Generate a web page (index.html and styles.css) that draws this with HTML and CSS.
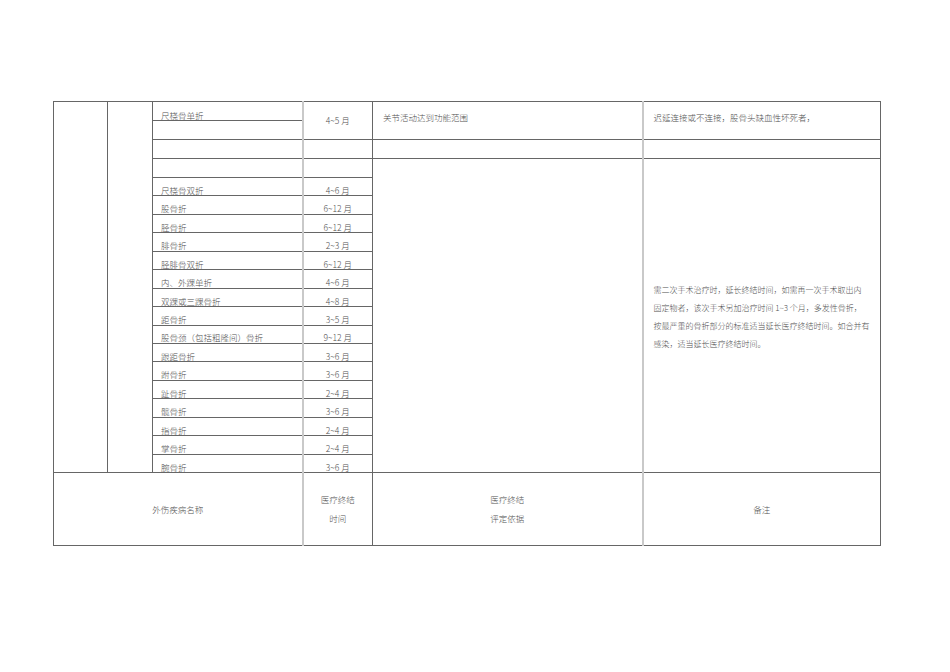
FILE: index.html
```html
<!DOCTYPE html>
<html lang="zh-CN">
<head>
<meta charset="utf-8">
<link rel="stylesheet" href="styles.css">
</head>
<body>
<div class="page">
<table class="sheet">
<colgroup><col class="c1"><col class="c2"><col class="c3"><col class="c4"><col class="c5"><col class="c6"></colgroup>
<tr class="r19">
  <td class="blank" rowspan="20"></td>
  <td class="blank" rowspan="20"></td>
  <td class="name">尺桡骨单折</td>
  <td class="month mid" rowspan="2">4~5 月</td>
  <td class="basis top" rowspan="2">关节活动达到功能范围</td>
  <td class="note top" rowspan="2">迟延连接或不连接，股骨头缺血性坏死者，</td>
</tr>
<tr class="r19"><td class="name"></td></tr>
<tr class="r19"><td class="name"></td><td class="month"></td><td class="basis"></td><td class="note"></td></tr>
<tr class="r19"><td class="name"></td><td class="month"></td><td class="basis" rowspan="17"></td><td class="note remark" rowspan="17">需二次手术治疗时，延长终结时间，如需再一次手术取出内<br>固定物者，该次手术另加治疗时间 1~3 个月，多发性骨折，<br>按最严重的骨折部分的标准适当延长医疗终结时间。如合并有<br>感染，适当延长医疗终结时间。</td></tr>
<tr class="rr"><td class="name">尺桡骨双折</td><td class="month">4~6 月</td></tr>
<tr class="rr"><td class="name">股骨折</td><td class="month">6~12 月</td></tr>
<tr class="rr"><td class="name">胫骨折</td><td class="month">6~12 月</td></tr>
<tr class="rr"><td class="name">腓骨折</td><td class="month">2~3 月</td></tr>
<tr class="rr"><td class="name">胫腓骨双折</td><td class="month">6~12 月</td></tr>
<tr class="rr"><td class="name">内、外踝单折</td><td class="month">4~6 月</td></tr>
<tr class="rr"><td class="name">双踝或三踝骨折</td><td class="month">4~8 月</td></tr>
<tr class="rr"><td class="name">距骨折</td><td class="month">3~5 月</td></tr>
<tr class="rr"><td class="name">股骨颈（包括粗隆间）骨折</td><td class="month">9~12 月</td></tr>
<tr class="rr"><td class="name">跟距骨折</td><td class="month">3~6 月</td></tr>
<tr class="rr"><td class="name">跗骨折</td><td class="month">3~6 月</td></tr>
<tr class="rr"><td class="name">趾骨折</td><td class="month">2~4 月</td></tr>
<tr class="rr"><td class="name">髋骨折</td><td class="month">3~6 月</td></tr>
<tr class="rr"><td class="name">指骨折</td><td class="month">2~4 月</td></tr>
<tr class="rr"><td class="name">掌骨折</td><td class="month">2~4 月</td></tr>
<tr class="rr"><td class="name">腕骨折</td><td class="month">3~6 月</td></tr>
<tr class="head">
  <td class="hcell" colspan="3">外伤疾病名称</td>
  <td class="hcell month">医疗终结<br>时间</td>
  <td class="hcell basis">医疗终结<br>评定依据</td>
  <td class="hcell note">备注</td>
</tr>
</table>
</div>
</body>
</html>
```
FILE: styles.css
```css
html, body {
  margin: 0;
  padding: 0;
  background: #fff;
}
body {
  width: 950px;
  height: 672px;
  overflow: hidden;
  font-family: "Noto Sans CJK SC", "Liberation Serif", serif;
  font-weight: 300;
  color: #505050;
}
.page {
  padding: 101px 0 0 53px;
}
.sheet {
  border-collapse: collapse;
  table-layout: fixed;
  width: 827px;
  font-size: 8.5px;
  line-height: 1;
}
.c1 { width: 54px; }
.c2 { width: 45px; }
.c3 { width: 150px; }
.c4 { width: 70px; }
.c5 { width: 270px; }
.c6 { width: 238px; }
.sheet td {
  border: 1px solid #666;
  padding: 0;
  white-space: nowrap;
}
.r19 { height: 19px; }
.rr { height: 18.44px; }
.head { height: 73px; }
.name {
  vertical-align: bottom;
  padding: 0 0 1px 8px !important;
  text-align: left;
}
.month {
  text-align: center;
  vertical-align: bottom;
  padding-bottom: 1px !important;
  border-left: 2px solid #c9c9c9 !important;
}
.month.mid {
  vertical-align: middle;
  padding-bottom: 0 !important;
}
.basis, .note {
  vertical-align: top;
}
.note {
  border-left: 2px solid #c9c9c9 !important;
}
.top {
  padding: 11px 0 0 10px !important;
}
.remark {
  vertical-align: middle !important;
  padding: 2px 0 0 10px !important;
  font-size: 8px;
  line-height: 18px;
}
.hcell {
  text-align: center;
  vertical-align: middle !important;
  line-height: 19px;
  padding: 0 !important;
}
```
